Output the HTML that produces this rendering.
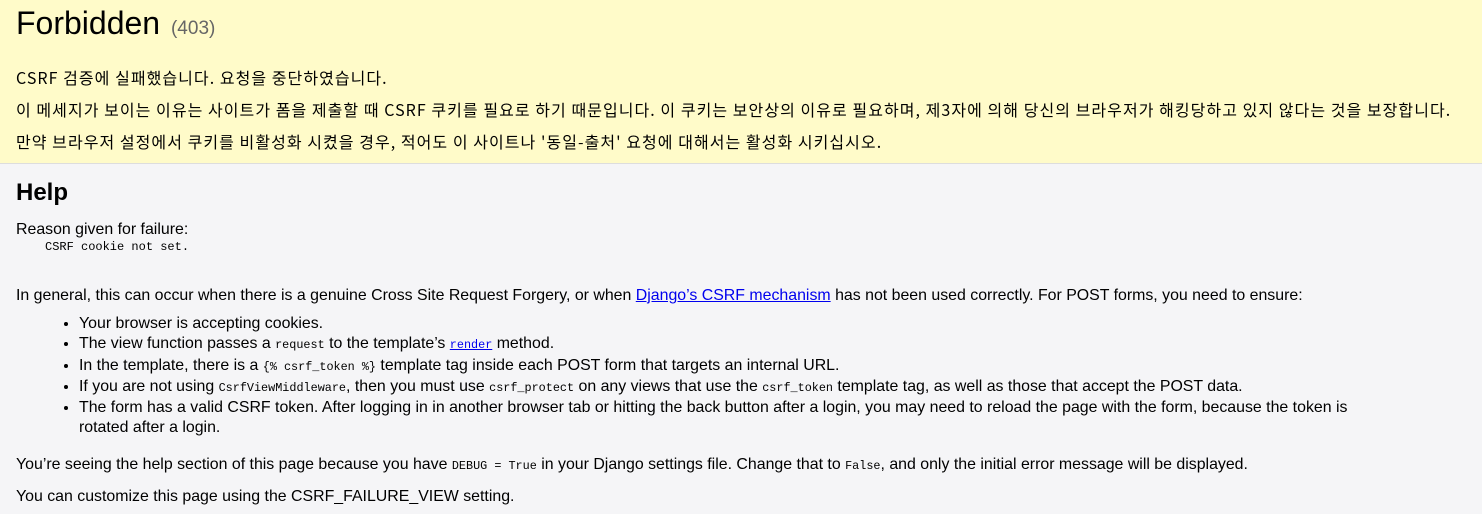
<!DOCTYPE html>
<html><head><meta charset="utf-8"><style>
html,body{margin:0;padding:0;width:1482px;height:514px;overflow:hidden;background:#f5f5f7;}
body{font-family:"Liberation Sans","Noto Sans CJK KR",sans-serif;font-size:15.9px;color:#000;}
#summary{background:#fffbc9;border-bottom:1px solid #ddd;height:163px;position:relative;}
.a{position:absolute;left:16px;white-space:nowrap;line-height:20px;}
h1{position:absolute;left:16px;top:3px;margin:0;font-weight:normal;font-size:32px;line-height:40px;}
h1 span{font-size:19px;color:#666;margin-left:2px;}
.k{font-family:"Noto Sans CJK KR","Liberation Sans",sans-serif;font-size:16px;letter-spacing:1.05px;}
h2{position:absolute;left:16px;top:178px;margin:0;font-size:24px;line-height:30px;}
code{font-family:"Liberation Mono",monospace;font-size:11.8px;}
.m{font-family:"Liberation Mono",monospace;font-size:12px;}
a{color:#00e;}
ul{position:absolute;left:63px;top:314px;margin:0;padding-left:16px;width:1305px;line-height:20.3px;}
</style></head><body>
<div id="summary">
<h1>Forbidden <span>(403)</span></h1>
<div class="a" style="top:67px"><span class="k">CSRF 검증에 실패했습니다. 요청을 중단하였습니다.</span></div>
<div class="a" style="top:99px"><span class="k">이 메세지가 보이는 이유는 사이트가 폼을 제출할 때 CSRF 쿠키를 필요로 하기 때문입니다. 이 쿠키는 보안상의 이유로 필요하며, 제3자에 의해 당신의 브라우저가 해킹당하고 있지 않다는 것을 보장합니다.</span></div>
<div class="a" style="top:131px"><span class="k">만약 브라우저 설정에서 쿠키를 비활성화 시켰을 경우, 적어도 이 사이트나 '동일-출처' 요청에 대해서는 활성화 시키십시오.</span></div>
</div>
<h2>Help</h2>
<div class="a" style="top:220px">Reason given for failure:</div>
<div class="a m" style="top:238px;left:45px;line-height:18px">CSRF cookie not set.</div>
<div class="a" style="top:286px">In general, this can occur when there is a genuine Cross Site Request Forgery, or when <a href="#">Django’s CSRF mechanism</a> has not been used correctly. For POST forms, you need to ensure:</div>
<ul>
<li>Your browser is accepting cookies.</li>
<li>The view function passes a <code>request</code> to the template’s <a href="#"><code>render</code></a> method.</li>
<li>In the template, there is a <code>{% csrf_token %}</code> template tag inside each POST form that targets an internal URL.</li>
<li>If you are not using <code>CsrfViewMiddleware</code>, then you must use <code>csrf_protect</code> on any views that use the <code>csrf_token</code> template tag, as well as those that accept the POST data.</li>
<li>The form has a valid CSRF token. After logging in in another browser tab or hitting the back button after a login, you may need to reload the page with the form, because the token is rotated after a login.</li>
</ul>
<div class="a" style="top:455px">You’re seeing the help section of this page because you have <code>DEBUG = True</code> in your Django settings file. Change that to <code>False</code>, and only the initial error message will be displayed.</div>
<div class="a" style="top:487px">You can customize this page using the CSRF_FAILURE_VIEW setting.</div>
</body></html>
